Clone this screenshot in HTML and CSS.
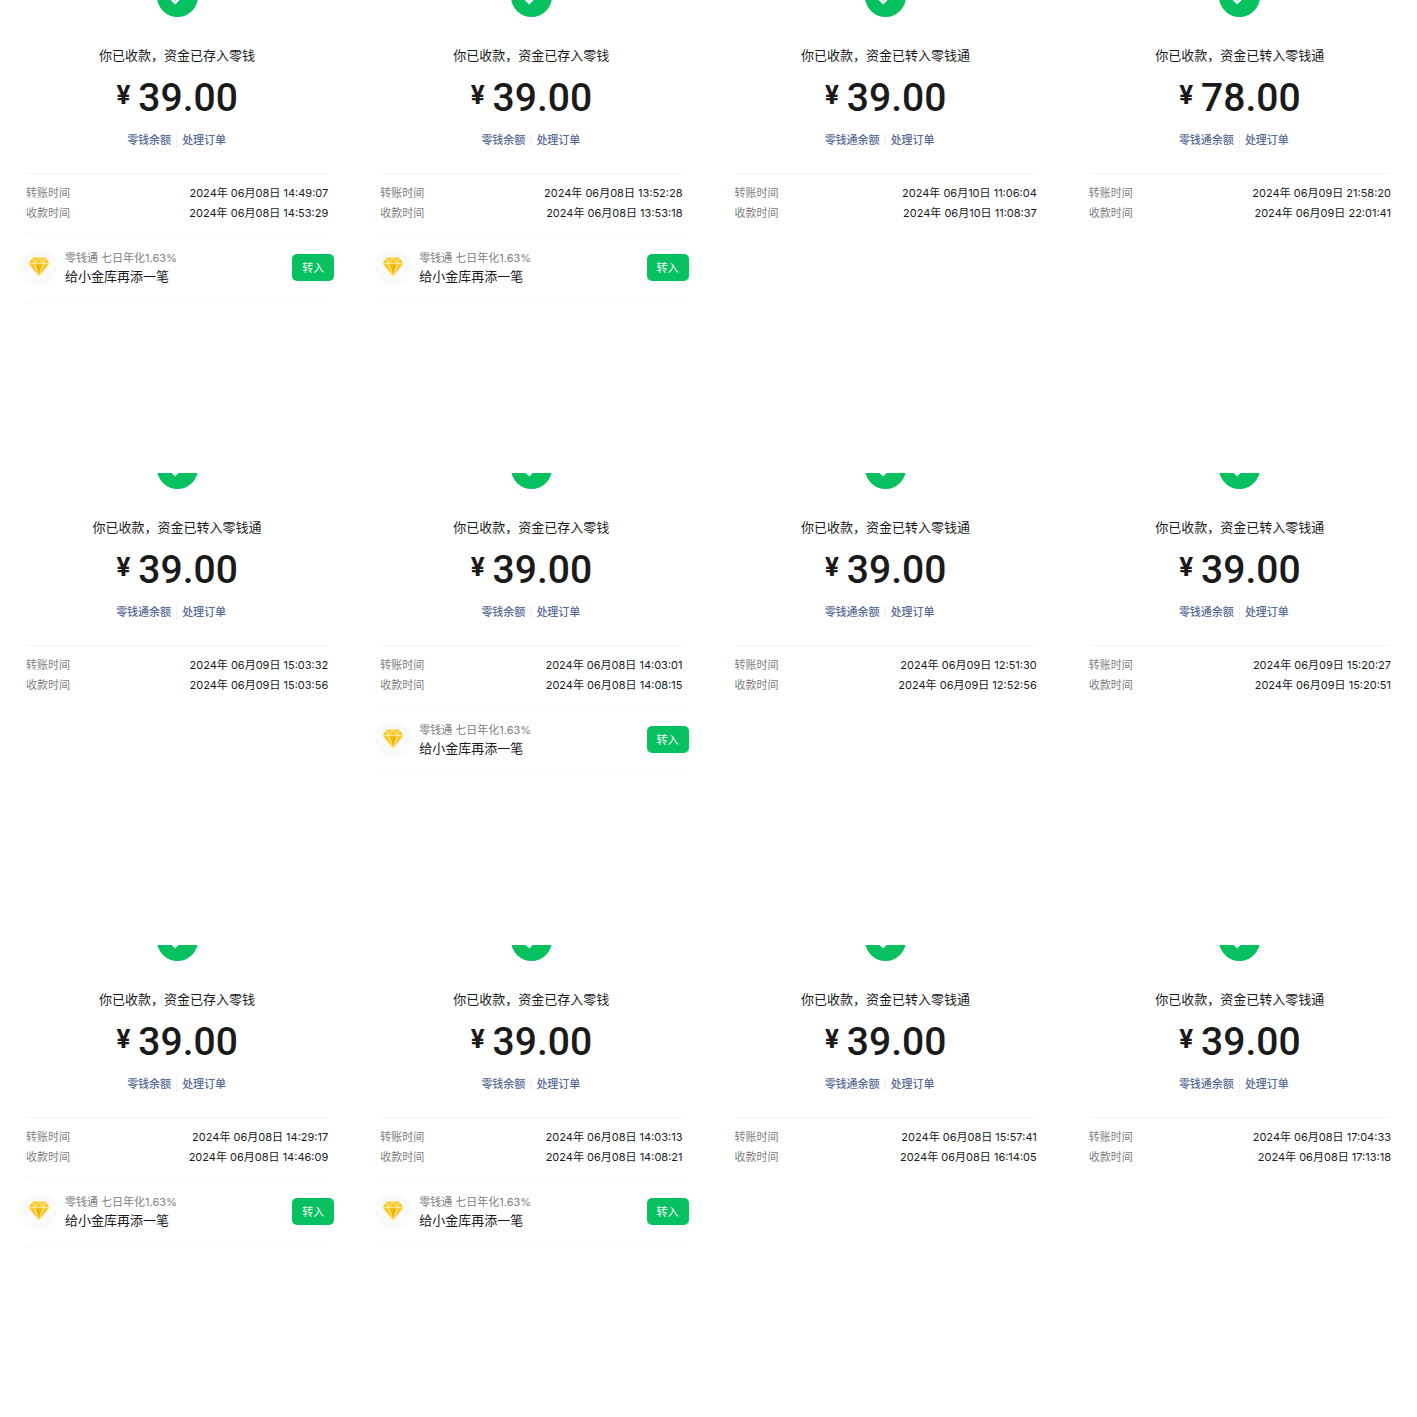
FILE: index.html
```html
<!DOCTYPE html>
<html lang="zh-CN">
<head>
    <meta charset="UTF-8">
    <meta name="viewport" content="width=device-width, initial-scale=1.0">
    <title>收款记录</title>
    <link rel="stylesheet" href="styles.css">
</head>
<body>

<!-- Shared icons -->
<svg class="icon-defs" width="0" height="0" aria-hidden="true">
    <symbol id="icon-check" viewBox="0 0 42 42">
        <circle cx="21" cy="21" r="21" fill="#07c160"/>
        <path d="M9.5 18.2 L18.6 27.3 L33 12.9" fill="none" stroke="#fff" stroke-width="2.6"/>
    </symbol>
    <symbol id="icon-diamond" viewBox="0 0 22 20">
        <path d="M4.6 0.5 H17.4 L21.5 6.6 L11 19.5 L0.5 6.6 Z" fill="#f8cb2e"/>
        <path d="M6.6 6.6 H15.4 L11 19.5 Z" fill="#f0b90b"/>
        <path d="M0.5 6.6 H21.5 M6.6 6.6 L11 19.5 L15.4 6.6 M4.6 0.5 L6.6 6.6 L11 0.5 L15.4 6.6 L17.4 0.5" fill="none" stroke="#fdf3cf" stroke-width="0.7"/>
    </symbol>
</svg>

<main id="receipts" class="receipts"></main>

<script>
    // fund: true means the money went to 零钱通 instead of 零钱
    const receipts = [
        { amount: '39.00', fund: false, sent: '2024年 06月08日 14:49:07', received: '2024年 06月08日 14:53:29' },
        { amount: '39.00', fund: false, sent: '2024年 06月08日 13:52:28', received: '2024年 06月08日 13:53:18' },
        { amount: '39.00', fund: true, sent: '2024年 06月10日 11:06:04', received: '2024年 06月10日 11:08:37' },
        { amount: '78.00', fund: true, sent: '2024年 06月09日 21:58:20', received: '2024年 06月09日 22:01:41' },
        { amount: '39.00', fund: true, sent: '2024年 06月09日 15:03:32', received: '2024年 06月09日 15:03:56' },
        { amount: '39.00', fund: false, sent: '2024年 06月08日 14:03:01', received: '2024年 06月08日 14:08:15' },
        { amount: '39.00', fund: true, sent: '2024年 06月09日 12:51:30', received: '2024年 06月09日 12:52:56' },
        { amount: '39.00', fund: true, sent: '2024年 06月09日 15:20:27', received: '2024年 06月09日 15:20:51' },
        { amount: '39.00', fund: false, sent: '2024年 06月08日 14:29:17', received: '2024年 06月08日 14:46:09' },
        { amount: '39.00', fund: false, sent: '2024年 06月08日 14:03:13', received: '2024年 06月08日 14:08:21' },
        { amount: '39.00', fund: true, sent: '2024年 06月08日 15:57:41', received: '2024年 06月08日 16:14:05' },
        { amount: '39.00', fund: true, sent: '2024年 06月08日 17:04:33', received: '2024年 06月08日 17:13:18' }
    ];

    // Offer shown only when the money is in 零钱
    const promo = `
        <div class="promo">
            <div class="promo-row">
                <span class="promo-icon"><svg><use href="#icon-diamond"/></svg></span>
                <div class="promo-text">
                    <p class="promo-rate">零钱通 七日年化1.63%</p>
                    <p class="promo-title">给小金库再添一笔</p>
                </div>
                <button type="button" class="promo-btn">转入</button>
            </div>
        </div>`;

    function createReceipt({ amount, fund, sent, received }) {
        const receipt = document.createElement('section');
        receipt.classList.add('receipt');
        receipt.innerHTML = `
            <svg class="check"><use href="#icon-check"/></svg>
            <p class="status">${fund ? '你已收款，资金已转入零钱通' : '你已收款，资金已存入零钱'}</p>
            <p class="amount"><span class="currency">¥</span><span>${amount}</span></p>
            <nav class="links">
                <a href="#">${fund ? '零钱通余额' : '零钱余额'}</a>
                <a href="#">处理订单</a>
            </nav>
            <dl class="times">
                <div><dt>转账时间</dt><dd>${sent}</dd></div>
                <div><dt>收款时间</dt><dd>${received}</dd></div>
            </dl>
            ${fund ? '' : promo}`;
        return receipt;
    }

    const container = document.getElementById('receipts');
    receipts.forEach(item => container.appendChild(createReceipt(item)));
</script>

</body>
</html>
```
FILE: styles.css
```css
body {
    margin: 0;
    background-color: #fff;
    color: #1a1a1a;
    font-family: Inter, 'Noto Sans CJK SC', sans-serif;
    font-size: 11px;
}

p, dl, dd {
    margin: 0;
}

.icon-defs {
    position: absolute;
}

.receipts {
    display: grid;
    grid-template-columns: repeat(4, 1fr);
    grid-auto-rows: minmax(472px, auto);
}

.receipt {
    display: flex;
    flex-direction: column;
    min-width: 0;
    padding: 0 26px;
    overflow: hidden;
}

/* Success mark, cut off by the top of the tile */
.check {
    flex: none;
    align-self: center;
    width: 41px;
    height: 41px;
    margin-top: -24px;
}

/* Rows after the first keep a thin gap above the mark */
.receipt:nth-child(n+5) {
    border-top: 1px solid #fff;
}

.receipt:nth-child(n+5) .check {
    margin-top: -25px;
}

.status {
    margin-top: 28px;
    font-size: 13px;
    line-height: 20px;
    text-align: center;
}

.amount {
    display: flex;
    justify-content: center;
    gap: 8px;
    margin-top: 10px;
    font-family: Roboto, sans-serif;
    font-size: 39px;
    font-weight: 500;
    line-height: 46px;
}

.currency {
    font-size: 26px;
    font-weight: 700;
    line-height: 40px;
}

/* Links sit on either side of a centred bar */
.links {
    display: grid;
    grid-template-columns: 1fr 1fr;
    margin-top: 11px;
    line-height: 16px;
}

.links a {
    padding: 0 5px;
    color: #576b95;
    font-weight: 500;
    text-decoration: none;
}

.links a:first-child {
    border-right: 1px solid #f2f2f2;
    text-align: right;
}

/* Times */
.times {
    margin-top: 25px;
    padding: 9px 0 10px;
    border-top: 1px solid #f5f5f5;
}

.times div {
    display: flex;
    justify-content: space-between;
    line-height: 20px;
}

.times dt {
    color: #808080;
}

/* Promo */
.promo {
    border: solid #f5f5f5;
    border-width: 1px 0;
}

/* Icon and button hang slightly past the dividers */
.promo-row {
    display: flex;
    align-items: center;
    height: 66px;
    margin: 0 -6px;
    padding: 0 0 2px 1px;
}

.promo-icon {
    display: flex;
    align-items: center;
    justify-content: center;
    width: 36px;
    height: 36px;
    border-radius: 50%;
    background-color: #fafafa;
}

.promo-icon svg {
    width: 22px;
    height: 20px;
}

.promo-text {
    flex: 1;
    margin-left: 8px;
    line-height: 18px;
}

.promo-rate {
    color: #808080;
}

.promo-title {
    font-size: 13px;
}

.promo-btn {
    width: 42px;
    height: 27px;
    padding: 0;
    border: 0;
    border-radius: 5px;
    background-color: #07c160;
    color: #fff;
    font-family: inherit;
    font-size: 11px;
    cursor: pointer;
}
```
